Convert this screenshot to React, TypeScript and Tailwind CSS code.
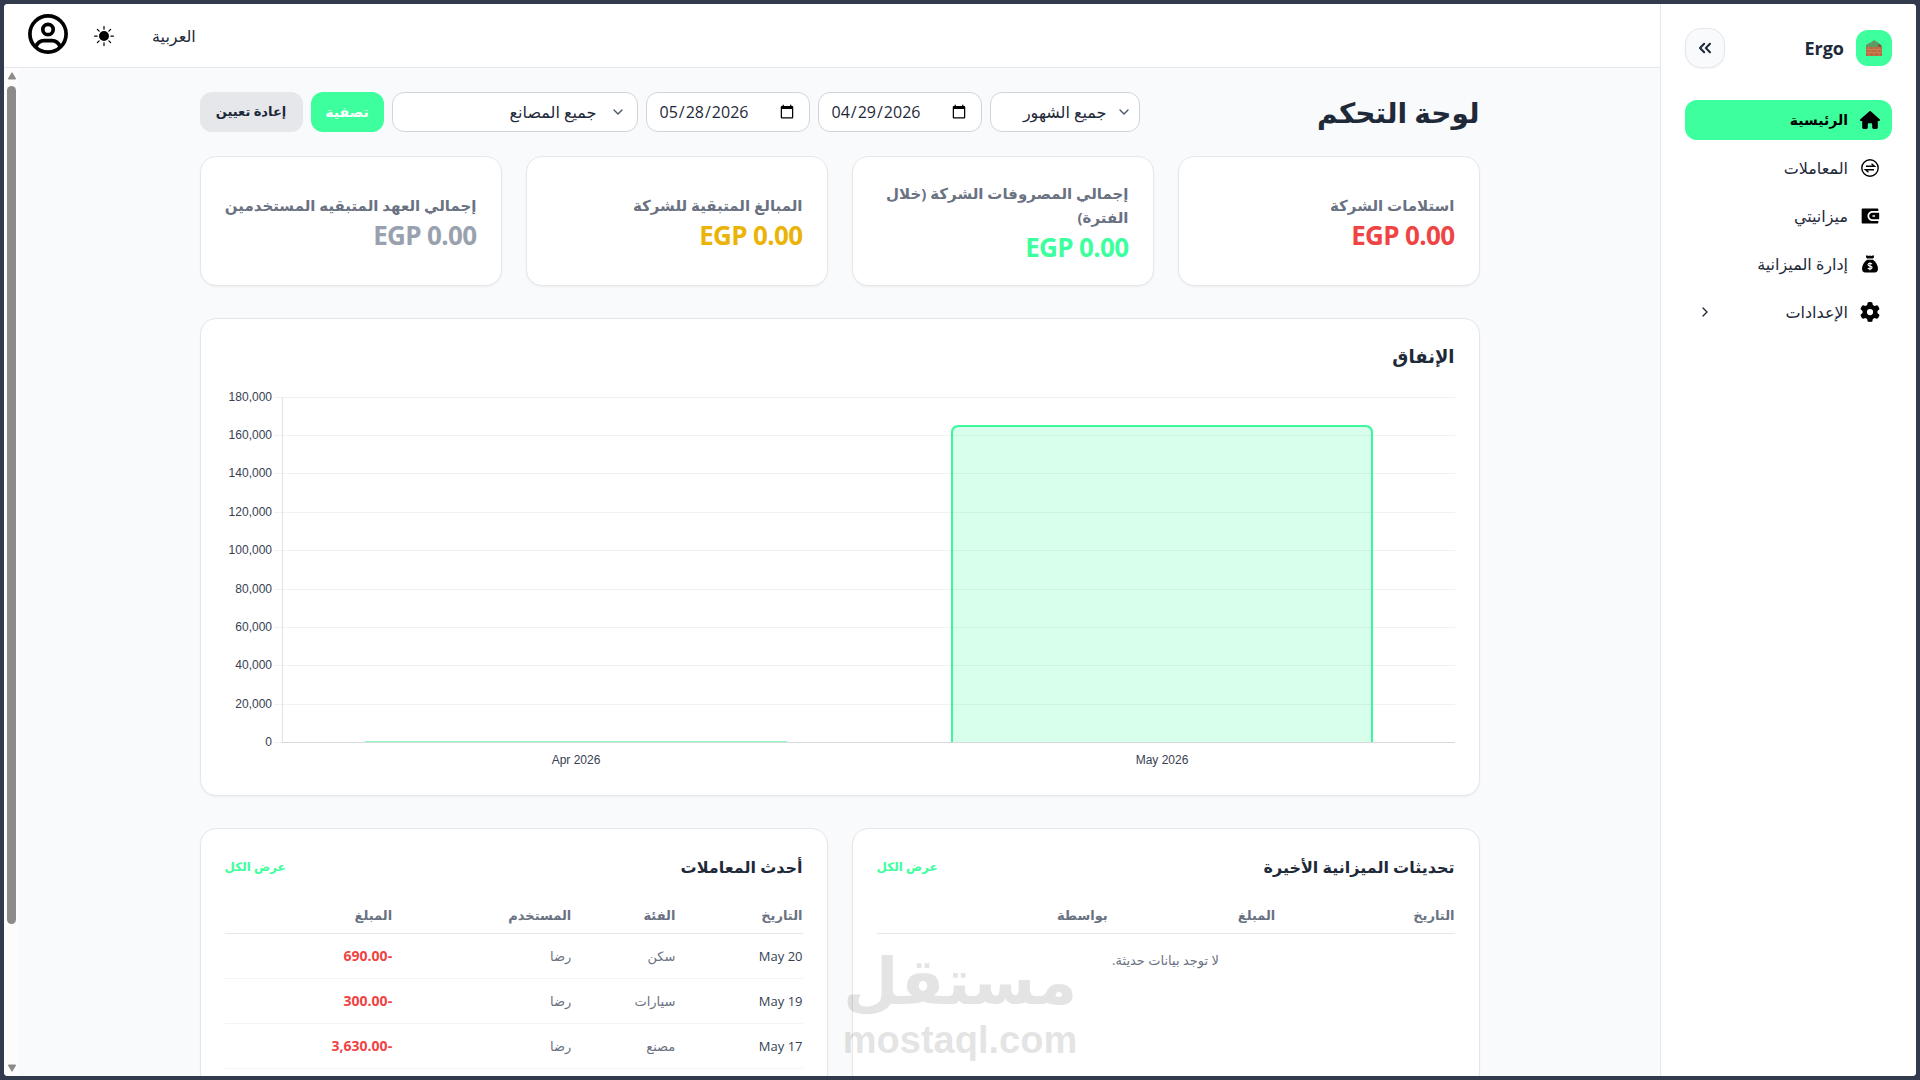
import React, { useState } from "react";
import { RiWallet3Fill } from "react-icons/ri";
import { FaGear, FaHouse } from "react-icons/fa6";
import { BsSunFill } from "react-icons/bs";
import { ChevronDown, ChevronRight, ChevronsLeft } from "lucide-react";

type IconProps = { className?: string };

function ExchangeIcon({ className }: IconProps) {
  return (
    <svg viewBox="0 0 20 20" className={className} fill="none" stroke="currentColor" aria-hidden="true">
      <circle cx="10" cy="10" r="8.2" strokeWidth="1.400" />
      <path d="M6 8.200h8.500L11.500 5.800M14 11.800H5.500l3 2.400" strokeWidth="1.400" />
    </svg>
  );
}

function MoneyBagIcon({ className }: IconProps) {
  return (
    <svg viewBox="0 0 20 20" className={className} aria-hidden="true">
      <path d="M6 1.500h1.600l1 .6 1.400-.6 1.400.6 1-.6H14v1.700l-1 1.300H7L6 3.200z" fill="currentColor" />
      <path d="M7 5.800h6c2.800 2.200 5 5.400 5 9 0 2.300-1.300 3.700-3.300 3.700H5.300C3.300 18.500 2 17.100 2 14.800c0-3.600 2.200-6.800 5-9z" fill="currentColor" />
      <path d="M12 10.300c-.4-.7-1-1-2-1-1.200 0-2 .6-2 1.400 0 2 4.100.8 4.100 2.900 0 .9-.9 1.500-2.100 1.500-1 0-1.800-.4-2.200-1.100M10 8.200v8" fill="none" stroke="#fff" strokeWidth="1.100" />
    </svg>
  );
}

function ProfileIcon({ className }: IconProps) {
  return (
    <svg viewBox="0 0 40 40" className={className} fill="none" stroke="currentColor" strokeWidth="3.700" aria-hidden="true">
      <circle cx="20" cy="20" r="18.100" />
      <circle cx="20" cy="15.500" r="5.200" />
      <path d="M8 32.500c1.500-3.600 4.300-5.800 8-5.800h8c3.700 0 6.500 2.200 8 5.800" />
    </svg>
  );
}

const navItems = [
  { label: "الرئيسية", icon: FaHouse, active: true },
  { label: "المعاملات", icon: ExchangeIcon },
  { label: "ميزانيتي", icon: RiWallet3Fill },
  { label: "إدارة الميزانية", icon: MoneyBagIcon },
  { label: "الإعدادات", icon: FaGear, expandable: true },
];

const stats = [
  { label: "استلامات الشركة", value: "EGP 0.00", color: "text-[#ef4444]" },
  { label: "إجمالي المصروفات الشركة (خلال الفترة)", value: "EGP 0.00", color: "text-[#3dff9e]" },
  { label: "المبالغ المتبقية للشركة", value: "EGP 0.00", color: "text-[#eab308]" },
  { label: "إجمالي العهد المتبقيه المستخدمين", value: "EGP 0.00", color: "text-gray-400" },
];

const transactions = [
  { date: "May 20", category: "سكن", user: "رضا", amount: "-690.00" },
  { date: "May 19", category: "سيارات", user: "رضا", amount: "-300.00" },
  { date: "May 17", category: "مصنع", user: "رضا", amount: "-3,630.00" },
];

const ticks = [
  { label: "180,000", y: 12 },
  { label: "160,000", y: 50 },
  { label: "140,000", y: 88 },
  { label: "120,000", y: 127 },
  { label: "100,000", y: 165 },
  { label: "80,000", y: 204 },
  { label: "60,000", y: 242 },
  { label: "40,000", y: 280 },
  { label: "20,000", y: 319 },
  { label: "0", y: 357 },
];

function BrickLogo() {
  return (
    <span className="flex size-9 items-center justify-center rounded-xl bg-[#3dff9e]">
      <svg viewBox="0 0 16 16" className="size-4" aria-hidden="true">
        <path d="M0 5 3 3 5 2.500 8 0l3 2 3 2 2 2v4H0z" fill="#5f9a63" />
        <path d="M0 7h16v9H0z" fill="#b9683f" />
        <path d="M12 4l3 1v2h-3z" fill="#7b5a3c" />
        <path d="M0 9.500h16M0 12.500h16M3 7v2.500M8 7v2.500M13 7v2.500M5 9.500v3M11 9.500v3M3 12.500V16M8 12.500V16M13 12.500V16" stroke="#d58f63" strokeWidth="0.6" />
      </svg>
    </span>
  );
}

function Sidebar() {
  return (
    <aside className="flex w-64 shrink-0 flex-col gap-8 border-l border-gray-200 bg-white p-6">
      <div className="flex h-10 items-center justify-between">
        <div className="flex items-center gap-3">
          <BrickLogo />
          <span className="text-lg font-bold text-gray-800">Ergo</span>
        </div>
        <button type="button" aria-label="طي القائمة" className="flex size-10 items-center justify-center rounded-2xl border border-gray-200 bg-gray-50 text-gray-800 shadow-xs">
          <ChevronsLeft className="size-5" strokeWidth={2.5} />
        </button>
      </div>
      <nav className="flex flex-col gap-2">
        {navItems.map((item) => (
          <a
            key={item.label}
            href="#"
            className={
              item.active
                ? "flex h-10 items-center gap-3 rounded-xl bg-[#3dff9e] px-3 text-sm font-bold text-black"
                : "flex h-10 items-center gap-3 rounded-xl px-3 text-base text-gray-800"
            }
          >
            <item.icon className="size-5 text-black" />
            <span className="grow">{item.label}</span>
            {item.expandable && <ChevronRight className="size-4" />}
          </a>
        ))}
      </nav>
    </aside>
  );
}

function Header() {
  return (
    <header className="flex h-16 shrink-0 items-center justify-end border-b border-gray-200 bg-white px-6">
      <button type="button" className="px-3 text-base text-gray-800">العربية</button>
      <button type="button" aria-label="الوضع الفاتح" className="mx-4 flex size-10 items-center justify-center text-black">
        <BsSunFill className="size-5" />
      </button>
      <button type="button" aria-label="الحساب" className="mb-1 text-black">
        <ProfileIcon className="size-10" />
      </button>
    </header>
  );
}

function Scrollbar() {
  return (
    <div className="flex w-[15px] shrink-0 flex-col items-center justify-between bg-[#fcfcfc] py-1" aria-hidden="true">
      <svg viewBox="0 0 10 8" className="h-2 w-[10px]"><path d="M5 0 9 6.500a1 1 0 0 1-1 1H2a1 1 0 0 1-1-1z" fill="#8b8b8b" /></svg>
      <div className="mt-1.5 mb-1 flex w-full grow flex-col items-center">
        <div className="h-[86%] w-[9px] rounded-full bg-[#8b8b8b]" />
      </div>
      <svg viewBox="0 0 10 8" className="h-2 w-[10px]"><path d="M5 8 9 1.500a1 1 0 0 0-1-1H2a1 1 0 0 0-1 1z" fill="#8b8b8b" /></svg>
    </div>
  );
}

function FilterSelect({ label, width, wide }: { label: string; width: string; wide?: boolean }) {
  return (
    <div className={"relative " + width}>
      <select
        aria-label={label}
        className={
          "h-10 w-full appearance-none rounded-xl border border-gray-300 bg-white pl-3 text-base text-gray-800 " +
          (wide ? "pr-10" : "pr-8")
        }
      >
        <option>{label}</option>
      </select>
      <ChevronDown
        className={"pointer-events-none absolute top-3 size-4 text-gray-600 " + (wide ? "right-3" : "right-2")}
      />
    </div>
  );
}

function DateField({ label, initial }: { label: string; initial: string }) {
  const [value, setValue] = useState(initial);
  return (
    <input
      type="date"
      dir="ltr"
      aria-label={label}
      value={value}
      onChange={(e) => setValue(e.target.value)}
      className="h-10 w-[164px] rounded-xl border border-gray-300 bg-white px-3 text-base text-gray-800"
    />
  );
}

function SpendingChart() {
  return (
    <svg viewBox="0 0 1230 386" className="block w-full font-['Liberation_Sans',Arial,sans-serif] text-[12px]" direction="ltr" role="img" aria-label="الإنفاق">
      {ticks.map((t) => (
        <g key={t.label}>
          <path d={`M49 ${t.y + 0.5}H1230`} stroke="#f0f1f3" />
          <text x="47" y={t.y + 4} textAnchor="end" fill="#374151">{t.label}</text>
        </g>
      ))}
      <path d="M57.500 12V358" stroke="#e2e2e2" />
      <rect x="140" y="356" width="422" height="1" fill="#3dff9e" fillOpacity="0.6" />
      <path d="M726 357V47q0-7 7-7H1141q7 0 7 7V357z" fill="#3dff9e" fillOpacity="0.2" />
      <path d="M727 357V48q0-7 7-7H1140q7 0 7 7V357" fill="none" stroke="#3df79c" strokeWidth="2" />
      <path d="M57 357.500H1230" stroke="#d9d9d9" />
      <text x="351" y="379" textAnchor="middle" fill="#374151">Apr 2026</text>
      <text x="937" y="379" textAnchor="middle" fill="#374151">May 2026</text>
    </svg>
  );
}

function PanelHeader({ title }: { title: string }) {
  return (
    <div className="flex h-7 items-center justify-between">
      <h2 className="text-base font-bold text-gray-800">{title}</h2>
      <a href="#" className="text-xs font-bold text-[#3dff9e]">عرض الكل</a>
    </div>
  );
}

const card = "rounded-2xl border border-gray-200 bg-white p-6 shadow-xs";

export default function App() {
  return (
    <div dir="rtl" lang="ar" className="h-screen overflow-hidden bg-[#323b4e] p-1 font-['Open_Sans','DejaVu_Sans',sans-serif]">
      <div className="relative flex h-full overflow-hidden rounded bg-white">
        <Sidebar />
        <div className="flex min-w-0 grow flex-col">
          <Header />
          <div className="flex min-h-0 grow">
            <main className="min-w-0 grow overflow-hidden bg-gray-50 pt-6">
              <div className="mx-auto flex max-w-[1280px] flex-col gap-8">
                <div className="flex flex-col gap-6">
                  <div className="flex items-center justify-between">
                    <h1 className="text-[28px] leading-10 font-bold text-gray-800">لوحة التحكم</h1>
                    <form className="flex items-center gap-2" onSubmit={(e) => e.preventDefault()}>
                      <FilterSelect label="جميع الشهور" width="w-[150px]" />
                      <DateField label="من تاريخ" initial="2026-04-29" />
                      <DateField label="إلى تاريخ" initial="2026-05-28" />
                      <FilterSelect label="جميع المصانع" width="w-[246px]" wide />
                      <button type="submit" className="h-10 w-[73px] rounded-xl bg-[#3dff9e] text-sm font-bold text-white">تصفية</button>
                      <button type="reset" className="h-10 w-[103px] rounded-xl bg-gray-200 text-[13px] font-bold text-gray-800">إعادة تعيين</button>
                    </form>
                  </div>
                  <section className="grid grid-cols-4 gap-6">
                    {stats.map((s) => (
                      <div key={s.label} className={card + " flex flex-col justify-center"}>
                        <h2 className="text-[15px] leading-6 font-bold text-gray-500">{s.label}</h2>
                        <p className={"pt-1 text-[26px] leading-7 font-bold tracking-tight " + s.color}>{s.value}</p>
                      </div>
                    ))}
                  </section>
                </div>
                <section className={card}>
                  <h2 className="mb-4 text-lg leading-[26px] font-bold text-gray-800">الإنفاق</h2>
                  <SpendingChart />
                </section>
                <div className="grid grid-cols-2 gap-6">
                  <section className={card}>
                    <PanelHeader title="تحديثات الميزانية الأخيرة" />
                    <table className="mt-4 w-full table-fixed text-right text-[13px] leading-5">
                      <thead>
                        <tr className="h-9 border-b border-gray-200 text-gray-500">
                          <th className="w-[31%] text-right font-bold">التاريخ</th>
                          <th className="w-[29%] text-right font-bold">المبلغ</th>
                          <th className="text-right font-bold">بواسطة</th>
                        </tr>
                      </thead>
                      <tbody>
                        <tr>
                          <td colSpan={3} className="py-4 text-center text-gray-500">لا توجد بيانات حديثة.</td>
                        </tr>
                      </tbody>
                    </table>
                  </section>
                  <section className={card}>
                    <PanelHeader title="أحدث المعاملات" />
                    <table className="mt-4 w-full table-fixed text-right text-[13px] leading-5">
                      <thead>
                        <tr className="h-9 border-b border-gray-200 text-gray-500">
                          <th className="w-[22%] text-right font-bold">التاريخ</th>
                          <th className="w-[18%] text-right font-bold">الفئة</th>
                          <th className="w-[31%] text-right font-bold">المستخدم</th>
                          <th className="text-right font-bold">المبلغ</th>
                        </tr>
                      </thead>
                      <tbody>
                        {transactions.map((t) => (
                          <tr key={t.date} className="h-[45px] border-b border-gray-100">
                            <td className="text-gray-700">{t.date}</td>
                            <td className="text-gray-500">{t.category}</td>
                            <td className="text-gray-500">{t.user}</td>
                            <td className="text-sm font-bold text-[#ef4444]">{t.amount}</td>
                          </tr>
                        ))}
                      </tbody>
                    </table>
                  </section>
                </div>
              </div>
            </main>
            <Scrollbar />
          </div>
        </div>
        <div className="pointer-events-none absolute bottom-4 left-[841px] flex w-[230px] flex-col items-center text-black opacity-10">
          <span className="text-[64px] leading-[76px] font-bold font-['DejaVu_Sans',sans-serif]">مستقل</span>
          <span dir="ltr" className="text-[38px] leading-10 font-bold font-['Liberation_Sans',sans-serif]">mostaql.com</span>
        </div>
      </div>
    </div>
  );
}
